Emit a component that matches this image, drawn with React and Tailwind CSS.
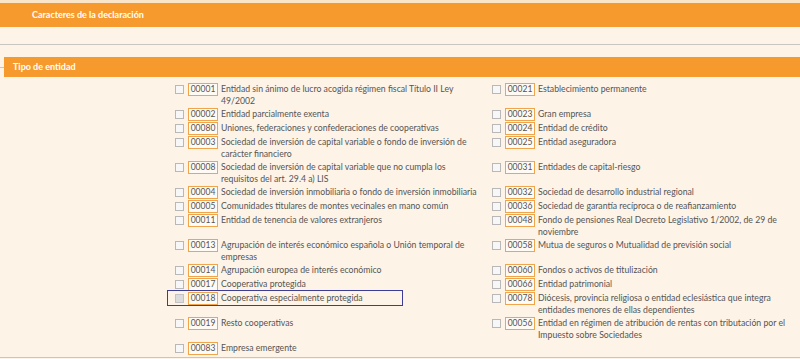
const rows = [
  [{ code: '00001', lines: ['Entidad sin ánimo de lucro acogida régimen fiscal Título II Ley', '49/2002'] }, { code: '00021', lines: ['Establecimiento permanente'] }],
  [{ code: '00002', lines: ['Entidad parcialmente exenta'] }, { code: '00023', lines: ['Gran empresa'] }],
  [{ code: '00080', lines: ['Uniones, federaciones y confederaciones de cooperativas'] }, { code: '00024', lines: ['Entidad de crédito'] }],
  [{ code: '00003', lines: ['Sociedad de inversión de capital variable o fondo de inversión de', 'carácter financiero'] }, { code: '00025', lines: ['Entidad aseguradora'] }],
  [{ code: '00008', lines: ['Sociedad de inversión de capital variable que no cumpla los', 'requisitos del art. 29.4 a) LIS'] }, { code: '00031', lines: ['Entidades de capital-riesgo'] }],
  [{ code: '00004', lines: ['Sociedad de inversión inmobiliaria o fondo de inversión inmobiliaria'] }, { code: '00032', lines: ['Sociedad de desarrollo industrial regional'] }],
  [{ code: '00005', lines: ['Comunidades titulares de montes vecinales en mano común'] }, { code: '00036', lines: ['Sociedad de garantía recíproca o de reafianzamiento'] }],
  [{ code: '00011', lines: ['Entidad de tenencia de valores extranjeros'] }, { code: '00048', lines: ['Fondo de pensiones Real Decreto Legislativo 1/2002, de 29 de', 'noviembre'] }],
  [{ code: '00013', lines: ['Agrupación de interés económico española o Unión temporal de', 'empresas'] }, { code: '00058', lines: ['Mutua de seguros o Mutualidad de previsión social'] }],
  [{ code: '00014', lines: ['Agrupación europea de interés económico'] }, { code: '00060', lines: ['Fondos o activos de titulización'] }],
  [{ code: '00017', lines: ['Cooperativa protegida'] }, { code: '00066', lines: ['Entidad patrimonial'] }],
  [{ code: '00018', lines: ['Cooperativa especialmente protegida'], disabled: true, focus: true }, { code: '00078', lines: ['Diócesis, provincia religiosa o entidad eclesiástica que integra', 'entidades menores de ellas dependientes'] }],
  [{ code: '00019', lines: ['Resto cooperativas'] }, { code: '00056', lines: ['Entidad en régimen de atribución de rentas con tributación por el', 'Impuesto sobre Sociedades'] }],
  [{ code: '00083', lines: ['Empresa emergente'] }, null],
];

function Item({ item }) {
  if (!item) return <div />;
  return (
    <div className="relative flex items-start">
      {item.focus && <div className="absolute -left-[8px] -top-[2px] w-[236px] h-[16px] border-[1.5px] border-[#3d3d95]" />}
      <span className={`mt-[2px] w-[9px] h-[9px] border ${item.disabled ? 'border-[#c4c4c4] bg-[#dcdcdc]' : 'border-[#b8b8b8] bg-[#f7f7f7]'}`} />
      <span className="ml-[4px] w-[30px] h-[13px] border border-[#f0a54c] bg-[#fffaf3] text-center text-[8.5px] leading-[11px] text-[#555]">{item.code}</span>
      <span className="ml-[3px] text-[8.7px] leading-[12px] text-[#555]">
        {item.lines.map((l, i) => <span key={i} className="block whitespace-nowrap">{l}</span>)}
      </span>
    </div>
  );
}

export default function App() {
  return (
    <div className="w-[800px] h-[359px] bg-[#fdf3e7] overflow-hidden" style={{ fontFamily: 'Lato, "Liberation Sans", sans-serif' }}>
      <div className="h-[3px] bg-[#fbe5c9]" />
      <div className="h-[24px] bg-[#f79a2e] flex items-center pl-[32px] text-white text-[9px] font-bold">Caracteres de la declaración</div>
      <div className="h-[17px]" />
      <div className="h-px bg-[#c9c6c2]" />
      <div className="h-[12px]" />
      <div className="flex items-center">
        <div className="w-[4px] h-px bg-[#c9c6c2]" />
        <div className="flex-1 h-[20px] bg-[#f79a2e] flex items-center pl-[9px] text-white text-[9px] font-bold">Tipo de entidad</div>
      </div>
      <div className="pt-[6px] pl-[175px] flex flex-col gap-[1px] h-[280px]">
        {rows.map((r, i) => (
          <div key={i} className="grid grid-cols-[317px_1fr]">
            <Item item={r[0]} />
            <Item item={r[1]} />
          </div>
        ))}
      </div>
      <div className="h-px bg-[#c9c6c2]" />
    </div>
  );
}
